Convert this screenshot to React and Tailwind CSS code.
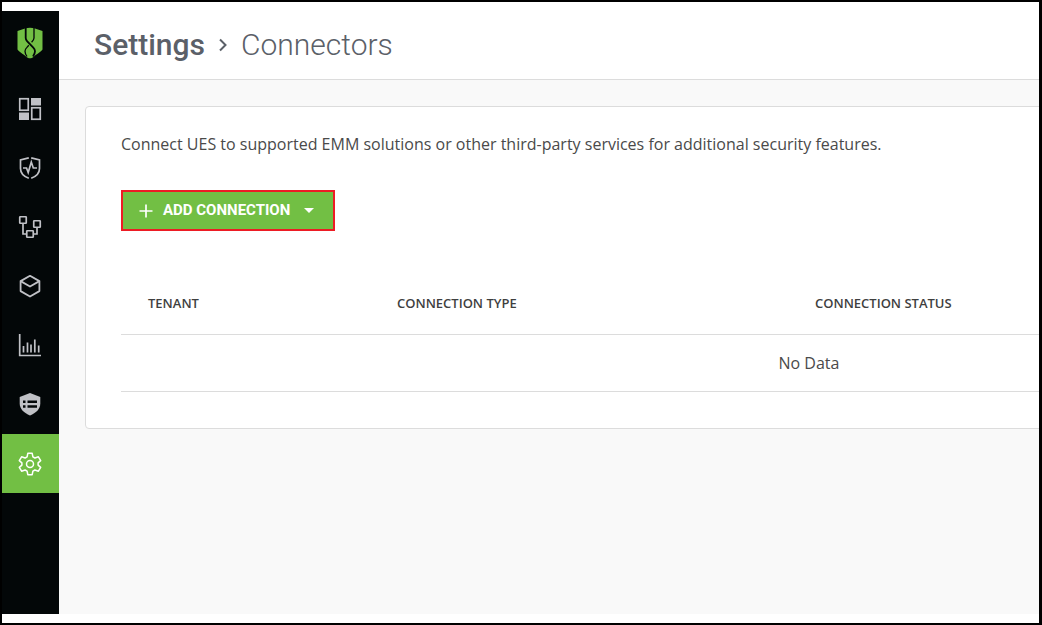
import React from 'react';

const LogoIcon = () => (
  <svg width="26" height="32" viewBox="0 0 26 32" fill="none">
    <path d="M8 1.500C11 .5 15 .5 18 1.500L25.500 4v18.500C23 26 18 28 17 29.500c-2 2.400-6 2.400-8 0C8 28 3 26 .5 22.500V4z" fill="#72bf44" />
    <path d="M8.700 1v10c0 1.500.6 2.200 1.600 3.400l6 6.200c1.200 1.300 1.700 2.200 1.700 3.600 0 2-1 3.800-2 5.300" stroke="#030708" strokeWidth="1.800" />
    <path d="M17 1v10c0 1.500-.8 2.500-2.400 4.200M11.800 18.200L9.700 20.600c-1.200 1.300-1.700 2.200-1.700 3.600 0 2 1 3.800 2 5.300" stroke="#030708" strokeWidth="1.300" />
  </svg>
);

const DashboardIcon = () => (
  <svg width="24" height="24" viewBox="0 0 24 24" fill="none">
    <rect x="1.750" y="1.750" width="8.500" height="11.500" stroke="currentColor" strokeWidth="1.700" />
    <rect x="13" y="1" width="10" height="7.500" fill="currentColor" />
    <rect x="1" y="15.500" width="10" height="7.500" fill="currentColor" />
    <rect x="13.750" y="10.750" width="8.500" height="11.500" stroke="currentColor" strokeWidth="1.700" />
  </svg>
);

const ProtectIcon = () => (
  <svg width="24" height="24" viewBox="0 0 24 24" fill="none" stroke="currentColor" strokeWidth="1.700">
    <path d="M10.800 1.800L2.500 3.800v8.700c0 4.500 3.500 8 8.300 9.800M13.200 1.800l8.300 2v8.700c0 4.500-3.500 8-8.300 9.800" />
    <path d="M5 12h3.500l1.700 4.500L13.300 6l2 6H19" />
  </svg>
);

const NetworkIcon = () => (
  <svg width="24" height="24" viewBox="0 0 24 24" fill="none" stroke="currentColor" strokeWidth="1.700">
    <rect x="1.750" y="1.750" width="6.500" height="6.500" rx="0.500" />
    <rect x="15.750" y="5.750" width="6.500" height="6.500" rx="0.500" />
    <rect x="8.750" y="15.750" width="6.500" height="6.500" rx="0.500" />
    <path d="M5 8.500V19h3.500M15.500 19H19v-6.500" />
  </svg>
);

const CubeIcon = () => (
  <svg width="24" height="24" viewBox="0 0 24 24" fill="none" stroke="currentColor" strokeWidth="1.800" strokeLinejoin="round">
    <path d="M12 1.800l9.400 5.300v10L12 22.500l-9.400-5.400v-10z" />
    <path d="M2.600 7.100L12 12.500l9.400-5.400" />
  </svg>
);

const ChartIcon = () => (
  <svg width="24" height="24" viewBox="0 0 24 24" fill="none" stroke="currentColor" strokeWidth="1.700">
    <path d="M1.700 1v21.500H23" />
    <path d="M5.500 19.500V13M9.500 19.500V9.500M13 19.500v-8M16.800 19.500V6.500M20.700 19.500v-7" />
  </svg>
);

const PolicyIcon = () => (
  <svg width="24" height="24" viewBox="0 0 24 24" fill="none">
    <path d="M12 1l10.300 4v6.500c0 5.500-4.300 9.500-10.300 12-6-2.500-10.300-6.500-10.300-12V5z" fill="currentColor" />
    <path d="M5 9.700h2.500M9.500 9.700H19M5 14.500h2.500M9.500 14.500H19" stroke="#030708" strokeWidth="2.400" />
  </svg>
);

const SettingsIcon = () => (
  <svg width="24" height="24" viewBox="0 0 24 24" fill="none" stroke="currentColor" strokeWidth="1.500" strokeLinejoin="round">
    <path d="M9.800 1.300h4.400l.7 3.500 2 1.200 3.500-1.200 2.300 3.800-2.600 2.300v2.200l2.600 2.300-2.300 3.800-3.500-1.200-2 1.200-.7 3.500H9.800l-.7-3.500-2-1.200-3.500 1.200-2.300-3.800 2.600-2.300v-2.200L1.300 8.600l2.300-3.800L7.100 6l2-1.200z" />
    <circle cx="12" cy="12" r="3.500" />
  </svg>
);

const navItems = [
  { name: 'Dashboard', Icon: DashboardIcon },
  { name: 'Protect', Icon: ProtectIcon },
  { name: 'Network', Icon: NetworkIcon },
  { name: 'Assets', Icon: CubeIcon },
  { name: 'Reports', Icon: ChartIcon },
  { name: 'Policies', Icon: PolicyIcon },
  { name: 'Settings', Icon: SettingsIcon, active: true },
];

const Sidebar = () => (
  <nav className="w-[57px] shrink-0 mt-[9px] bg-[#030708]">
    <a href="#" aria-label="Home" className="flex h-[69px] items-center justify-center pr-0.5 pb-1.5">
      <LogoIcon />
    </a>
    {navItems.map(({ name, Icon, active }) => (
      <a
        key={name}
        href="#"
        aria-label={name}
        className={`flex h-[59px] items-center justify-center pr-0.5 ${active ? 'bg-[#72bf44] text-white' : 'pb-0.5 text-[#c0c1c6]'}`}
      >
        <Icon />
      </a>
    ))}
  </nav>
);

const ConnectionTable = () => (
  <table className="w-full table-fixed border-collapse text-left">
    <thead>
      <tr className="h-[61px] border-b border-[#dcdcdc] text-[13px] text-[#3f3f3f]">
        <th className="w-[249px] pl-[27px] font-semibold">TENANT</th>
        <th className="w-[418px] pl-[27px] font-semibold">CONNECTION TYPE</th>
        <th className="pl-[27px] font-semibold">CONNECTION STATUS</th>
      </tr>
    </thead>
    <tbody>
      <tr className="h-[57px] border-b border-[#dcdcdc]">
        <td colSpan={3} className="text-center text-base text-[#4a4a4a]">No Data</td>
      </tr>
    </tbody>
  </table>
);

const App = () => {
  return (
    <div className="flex min-h-screen overflow-hidden border-2 border-r-[3px] border-black bg-white pb-[9px] font-['Open_Sans',sans-serif]">
      <Sidebar />

      <div className="flex min-w-0 flex-1 flex-col overflow-hidden">
        {/* Breadcrumb */}
        <header className="flex h-[78px] shrink-0 items-center border-b border-[#dcdcdc] pl-[35px] pt-2 font-[Roboto,sans-serif] text-[30px] text-[#5b6068]">
          <h1 className="font-medium">Settings</h1>
          <svg className="mx-3" width="12" height="16" viewBox="0 0 12 16" fill="none" stroke="currentColor" strokeWidth="2">
            <path d="M3 2.500L8.500 8 3 13.500" />
          </svg>
          <span className="font-light">Connectors</span>
        </header>

        <main className="flex-1 bg-[#f9f9f9] pl-[26px] pt-[26px]">
          {/* Wide card, runs past the right edge on small windows */}
          <section className="min-w-[1448px] rounded-sm border border-[#dcdcdc] bg-white px-[35px] pb-9 pt-[25px]">
            <p className="text-base leading-6 text-[#4a4a4a]">
              Connect UES to supported EMM solutions or other third-party services for additional security features.
            </p>

            <button className="mt-[34px] flex h-[41px] w-[214px] items-center border-2 border-[#ed1c24] bg-[#72bf44] pl-4 pr-[19px] font-[Roboto,sans-serif] text-[15px] font-bold text-white">
              <svg width="14" height="14" viewBox="0 0 14 14" stroke="currentColor" strokeWidth="1.700">
                <path d="M7 .5v13M.5 7h13" />
              </svg>
              <span className="ml-[10px]">ADD CONNECTION</span>
              <svg className="ml-auto" width="10" height="5" viewBox="0 0 10 5" fill="currentColor">
                <path d="M0 0h10L5 5z" />
              </svg>
            </button>

            <div className="mt-[42px]">
              <ConnectionTable />
            </div>
          </section>
        </main>
      </div>
    </div>
  );
};

export default App;
